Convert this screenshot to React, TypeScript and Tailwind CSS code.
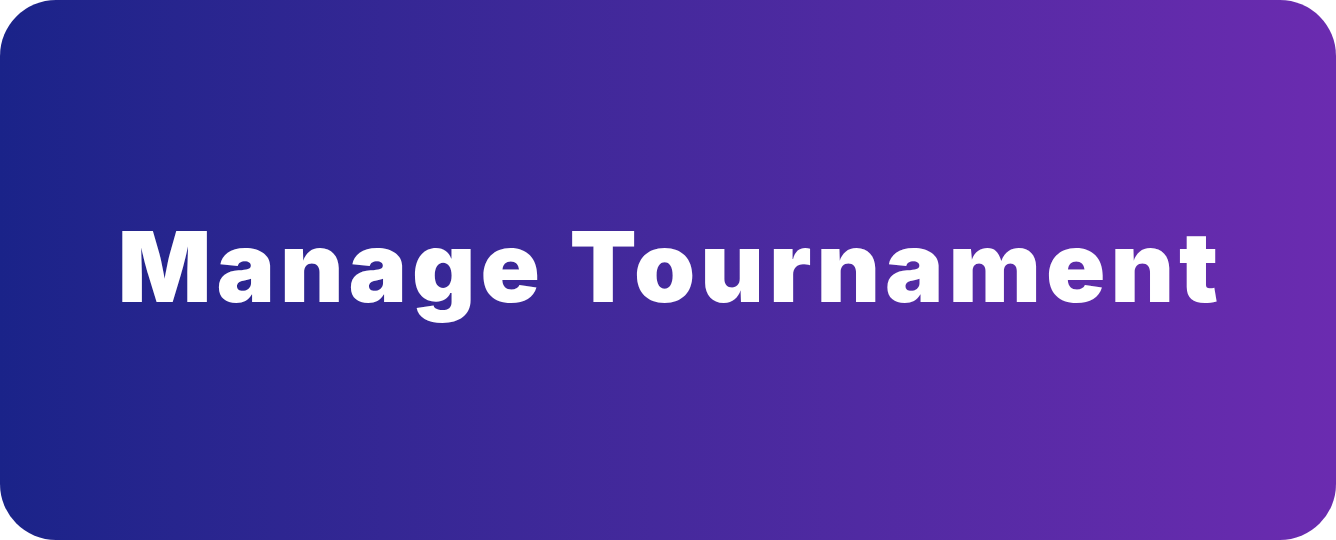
export default function App() {
  return (
    <div className="w-[1336px] h-[540px] bg-white">
      <div className="w-full h-full rounded-[56px] bg-gradient-to-r from-[#1a2389] to-[#6b2bb0] flex items-center justify-center">
        <h1 className="text-white text-[98px] font-black leading-none tracking-[5px] font-['Inter',sans-serif] pb-[6px] pl-[5px]">
          Manage Tournament
        </h1>
      </div>
    </div>
  );
}
